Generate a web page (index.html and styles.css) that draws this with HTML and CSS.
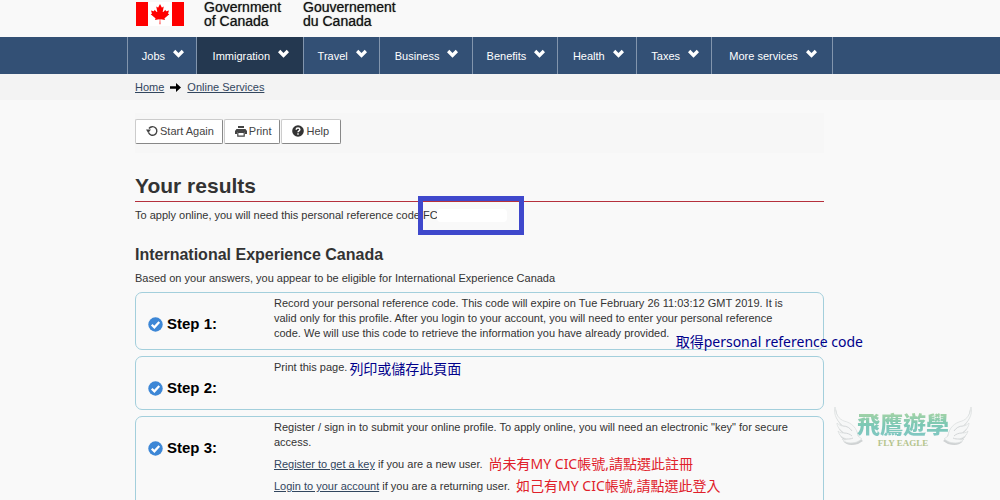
FILE: index.html
```html
<!DOCTYPE html>
<html lang="en">
<head>
    <meta charset="UTF-8">
    <meta name="viewport" content="width=device-width, initial-scale=1.0">
    <title>Your results</title>
    <link rel="stylesheet" href="styles.css">
</head>
<body>
    <svg class="sprite" aria-hidden="true">
        <symbol id="chevron" viewBox="0 0 12 9">
            <path d="M2.500 .5 6 4 9.500 .5 12 3 6 9 0 3z" fill="#fff"/>
        </symbol>
        <symbol id="check" viewBox="0 0 16 16">
            <circle cx="8" cy="8" r="7.700" fill="#3d87d6"/>
            <path d="m4 8.300 2.800 2.700L12 5.300" fill="none" stroke="#fff" stroke-width="2.400"/>
        </symbol>
        <symbol id="wing" viewBox="0 0 34 44">
            <path d="M2 3c1 8 4 12 9 14 8 2 13 7 14 15l4 3-5 3c-7 2-12 1-15-3 2 1 4 1 5 0-5-1-8-4-9-8 2 2 4 2 6 2-4-3-7-6-7-10 2 2 4 3 6 3C5 18 0 11 2 3z" transform="translate(1 2)" fill="#cfd2d3"/>
            <path d="M2 3c1 8 4 12 9 14 8 2 13 7 14 15l4 3-5 3c-7 2-12 1-15-3 2 1 4 1 5 0-5-1-8-4-9-8 2 2 4 2 6 2-4-3-7-6-7-10 2 2 4 3 6 3C5 18 0 11 2 3z" fill="#f6f7f7" stroke="#dcdfe0" stroke-width=".8"/>
            <path d="M10 22c4 0 7 2 9 5M11 29c3 0 6 1 8 3M14 35c2 0 4 0 6-1" fill="none" stroke="#d3d6d8" stroke-width="1"/>
        </symbol>
    </svg>

    <header class="header">
        <svg class="flag" viewBox="-4800 -2400 9600 4800" role="img" aria-label="Flag of Canada">
            <path d="M-4800-2400h9600v4800h-9600z" fill="#fff"/>
            <path d="M-4800-2400h2400v4800h-2400zM2400-2400h2400v4800H2400z" fill="#f00"/>
            <path fill="#f00" d="m-90 2030 45-863a95 95 0 0 0-111-98l-859 151 116-320a65 65 0 0 0-20-73l-941-762 212-99a65 65 0 0 0 34-79l-186-572 542 115a65 65 0 0 0 73-38l105-247 423 454a65 65 0 0 0 111-57l-204-1052 327 189a65 65 0 0 0 91-27l332-652 332 652a65 65 0 0 0 91 27l327-189-204 1052a65 65 0 0 0 111 57l423-454 105 247a65 65 0 0 0 73 38l542-115-186 572a65 65 0 0 0 34 79l212 99-941 762a65 65 0 0 0-20 73l116 320-859-151a95 95 0 0 0-111 98l45 863z"/>
        </svg>
        <div class="gov">Government<br>of Canada</div>
        <div class="gov" lang="fr">Gouvernement<br>du Canada</div>
    </header>

    <nav class="nav">
        <ul class="menu">
            <li><a href="#">Jobs <svg><use href="#chevron"/></svg></a></li>
            <li><a href="#" class="active">Immigration <svg><use href="#chevron"/></svg></a></li>
            <li><a href="#">Travel <svg><use href="#chevron"/></svg></a></li>
            <li><a href="#">Business <svg><use href="#chevron"/></svg></a></li>
            <li><a href="#">Benefits <svg><use href="#chevron"/></svg></a></li>
            <li><a href="#">Health <svg><use href="#chevron"/></svg></a></li>
            <li><a href="#">Taxes <svg><use href="#chevron"/></svg></a></li>
            <li><a href="#">More services <svg><use href="#chevron"/></svg></a></li>
        </ul>
    </nav>

    <div class="breadcrumb">
        <a href="#">Home</a>
        <svg viewBox="0 0 11 9"><path d="M0 3.200h6V0l5 4.500L6 9V5.800H0z"/></svg>
        <a href="#">Online Services</a>
    </div>

    <main class="main">
        <div class="toolbar">
            <button class="button" type="button">
                <svg viewBox="0 0 12 12"><path d="M2.500 7.500A4.300 4.300 0 1 0 3 3.500" fill="none" stroke="#444" stroke-width="1.400"/><path d="M0 4.500h5L2.200 8z" fill="#444"/></svg>
                Start Again
            </button>
            <button class="button" type="button">
                <svg viewBox="0 0 12 12"><path d="M3 1h6v2H3zM1.500 4h9L12 6v3h-2V7H2v2H0V6z" fill="#444"/><path d="M2.800 7.500h6.400v3.700H2.800z" fill="#fff" stroke="#444" stroke-width="1.200"/></svg>
                Print
            </button>
            <button class="button help" type="button">
                <svg viewBox="0 0 12 12"><circle cx="6" cy="6" r="5.800" fill="#333"/><path d="M4.200 4.700c0-2.400 3.700-2.300 3.700-.1C7.900 6 6 5.800 6 7.300M6 8.200v1.500" fill="none" stroke="#fff" stroke-width="1.400"/></svg>
                Help
            </button>
        </div>

        <h1>Your results</h1>
        <p class="reference">To apply online, you will need this personal reference code <span class="code">FC<span class="code-box"></span></span></p>

        <h2>International Experience Canada</h2>
        <p class="intro">Based on your answers, you appear to be eligible for International Experience Canada</p>

        <section class="step">
            <h3><svg><use href="#check"/></svg>Step 1:</h3>
            <div class="text">
                <p>Record your personal reference code. This code will expire on Tue February 26 11:03:12 GMT 2019. It is valid only for this profile. After you login to your account, you will need to enter your personal reference code. We will use this code to retrieve the information you have already provided.</p>
            </div>
            <span class="note note-code">取得personal reference code</span>
        </section>

        <section class="step">
            <h3><svg><use href="#check"/></svg>Step 2:</h3>
            <div class="text">
                <p>Print this page.<span class="note">列印或儲存此頁面</span></p>
            </div>
        </section>

        <section class="step step-register">
            <h3><svg><use href="#check"/></svg>Step 3:</h3>
            <div class="text">
                <p>Register / sign in to submit your online profile. To apply online, you will need an electronic "key" for secure access.</p>
                <p><a href="#">Register to get a key</a> if you are a new user.<span class="note red">尚未有MY CIC帳號,請點選此註冊</span></p>
                <p><a href="#">Login to your account</a> if you are a returning user.<span class="note red">如己有MY CIC帳號,請點選此登入</span></p>
            </div>
        </section>
    </main>

    <div class="watermark">
        <svg class="wing"><use href="#wing"/></svg>
        <div class="brand">
            <div class="brand-name">飛鷹遊學</div>
            <div class="brand-sub">FLY EAGLE</div>
        </div>
        <svg class="wing wing-right"><use href="#wing"/></svg>
    </div>
</body>
</html>
```
FILE: styles.css
```css
* {
    box-sizing: border-box;
}
body {
    margin: 0;
    height: 100vh;
    overflow: hidden;
    position: relative;
    font-family: "Liberation Sans", Arial, sans-serif;
    font-size: 11px;
    line-height: 16px;
    background-color: #f9f9f9;
    color: #333;
}
h1, h2, h3, p {
    margin: 0;
}
a {
    color: #32465e;
}
.sprite {
    display: none;
}
.header {
    display: flex;
    height: 37px;
    padding-left: 136px;
}
.flag {
    width: 48px;
    height: 24px;
    margin: 2px 20px 0 0;
}
.gov {
    margin-right: 22px;
    font-size: 14px;
    line-height: 14px;
    color: #111;
    text-shadow: 0 0 1px #666;
}
.nav {
    padding: 0 167px 0 127px;
    background-color: #335075;
}
.menu {
    display: grid;
    grid-template-columns: 69fr 107fr 76fr 93fr 86fr 79fr 75fr 121fr;
    height: 37px;
    margin: 0;
    padding: 0;
    list-style: none;
    border-left: 1px solid #8295ad;
}
.menu a {
    display: flex;
    align-items: center;
    justify-content: center;
    gap: 8px;
    height: 100%;
    padding-left: 2px;
    border-right: 1px solid #8295ad;
    color: #fff;
    text-decoration: none;
    white-space: nowrap;
}
.menu .active {
    background-color: #243850;
}
.menu svg {
    width: 11px;
    height: 9px;
    margin-bottom: 4px;
}
.breadcrumb {
    display: flex;
    align-items: center;
    gap: 6px;
    height: 26px;
    padding-left: 135px;
    background-color: #f3f3f3;
}
.breadcrumb svg {
    width: 11px;
    height: 9px;
}
.main {
    padding: 13px 176px 0 135px;
}
.toolbar {
    display: flex;
    align-items: flex-start;
    gap: 1px;
    height: 40px;
    padding-top: 6px;
    background-color: #f7f7f7;
}
.button {
    display: flex;
    align-items: center;
    gap: 2px;
    height: 25px;
    padding: 0 8px 2px 10px;
    font: inherit;
    color: #444;
    background-color: #fff;
    border: 1px solid #ccc;
    border-right-color: #888;
    border-bottom-color: #888;
    border-radius: 2px;
    cursor: pointer;
}
.button.help {
    padding-right: 11px;
}
.button svg {
    width: 12px;
    height: 12px;
}
h1 {
    padding: 20px 0 2px;
    font-size: 21px;
    line-height: 26px;
    border-bottom: 1px solid #b5303c;
}
.reference {
    padding-top: 5px;
}
.code {
    position: relative;
}
/* frame drawn round the code */
.code-box {
    position: absolute;
    top: -13px;
    left: -5px;
    width: 106px;
    height: 39px;
    border: 5px solid #3f48cc;
}
.code-box::before {
    content: "";
    display: block;
    height: 13px;
    margin: 8px 12px 0 14px;
    border-radius: 4px;
    background-color: #fff;
}
h2 {
    margin-top: 22px;
    font-size: 16px;
    line-height: 20px;
}
.intro {
    margin: 5px 0 6px;
}
.step {
    position: relative;
    display: grid;
    grid-template-columns: 126px 1fr;
    min-height: 54px;
    margin-bottom: 6px;
    padding: 3px 30px 8px 12px;
    border: 1px solid #a3cfdc;
    border-radius: 7px;
}
h3 {
    display: flex;
    align-items: center;
    gap: 4px;
    height: 20px;
    margin-top: 18px;
    font-size: 15px;
    line-height: 20px;
    color: #000;
}
h3 svg {
    width: 15px;
    height: 15px;
}
.step-register {
    min-height: 100px;
}
.text {
    line-height: 15px;
}
.text p {
    margin-bottom: 7px;
}
.text p:last-child {
    margin-bottom: 0;
}
.note {
    position: absolute;
    margin: 1px 0 0 2px;
    font-family: "Noto Sans", "Noto Sans CJK TC", sans-serif;
    font-size: 14px;
    line-height: 16px;
    color: #00008b;
    white-space: nowrap;
}
.note-code {
    right: -40px;
    bottom: -1px;
}
.note.red {
    margin: -1px 0 0 6px;
    color: #e0202a;
}
.watermark {
    position: absolute;
    top: 404px;
    right: 27px;
    display: flex;
}
.wing {
    width: 34px;
    height: 44px;
}
.wing-right {
    transform: scaleX(-1);
}
.brand {
    margin: 0 -10px;
    text-align: center;
}
.brand-name {
    padding-top: 4px;
    font-family: "Noto Sans CJK TC", sans-serif;
    font-size: 23px;
    line-height: 30px;
    font-weight: 900;
    color: transparent;
    background: linear-gradient(#c5dc9a, #7cc8b4 60%, #82c7c5);
    -webkit-background-clip: text;
    background-clip: text;
}
.brand-sub {
    font-family: "Liberation Serif", serif;
    font-size: 9px;
    line-height: 10px;
    font-weight: bold;
    color: #b5c48e;
}
```
